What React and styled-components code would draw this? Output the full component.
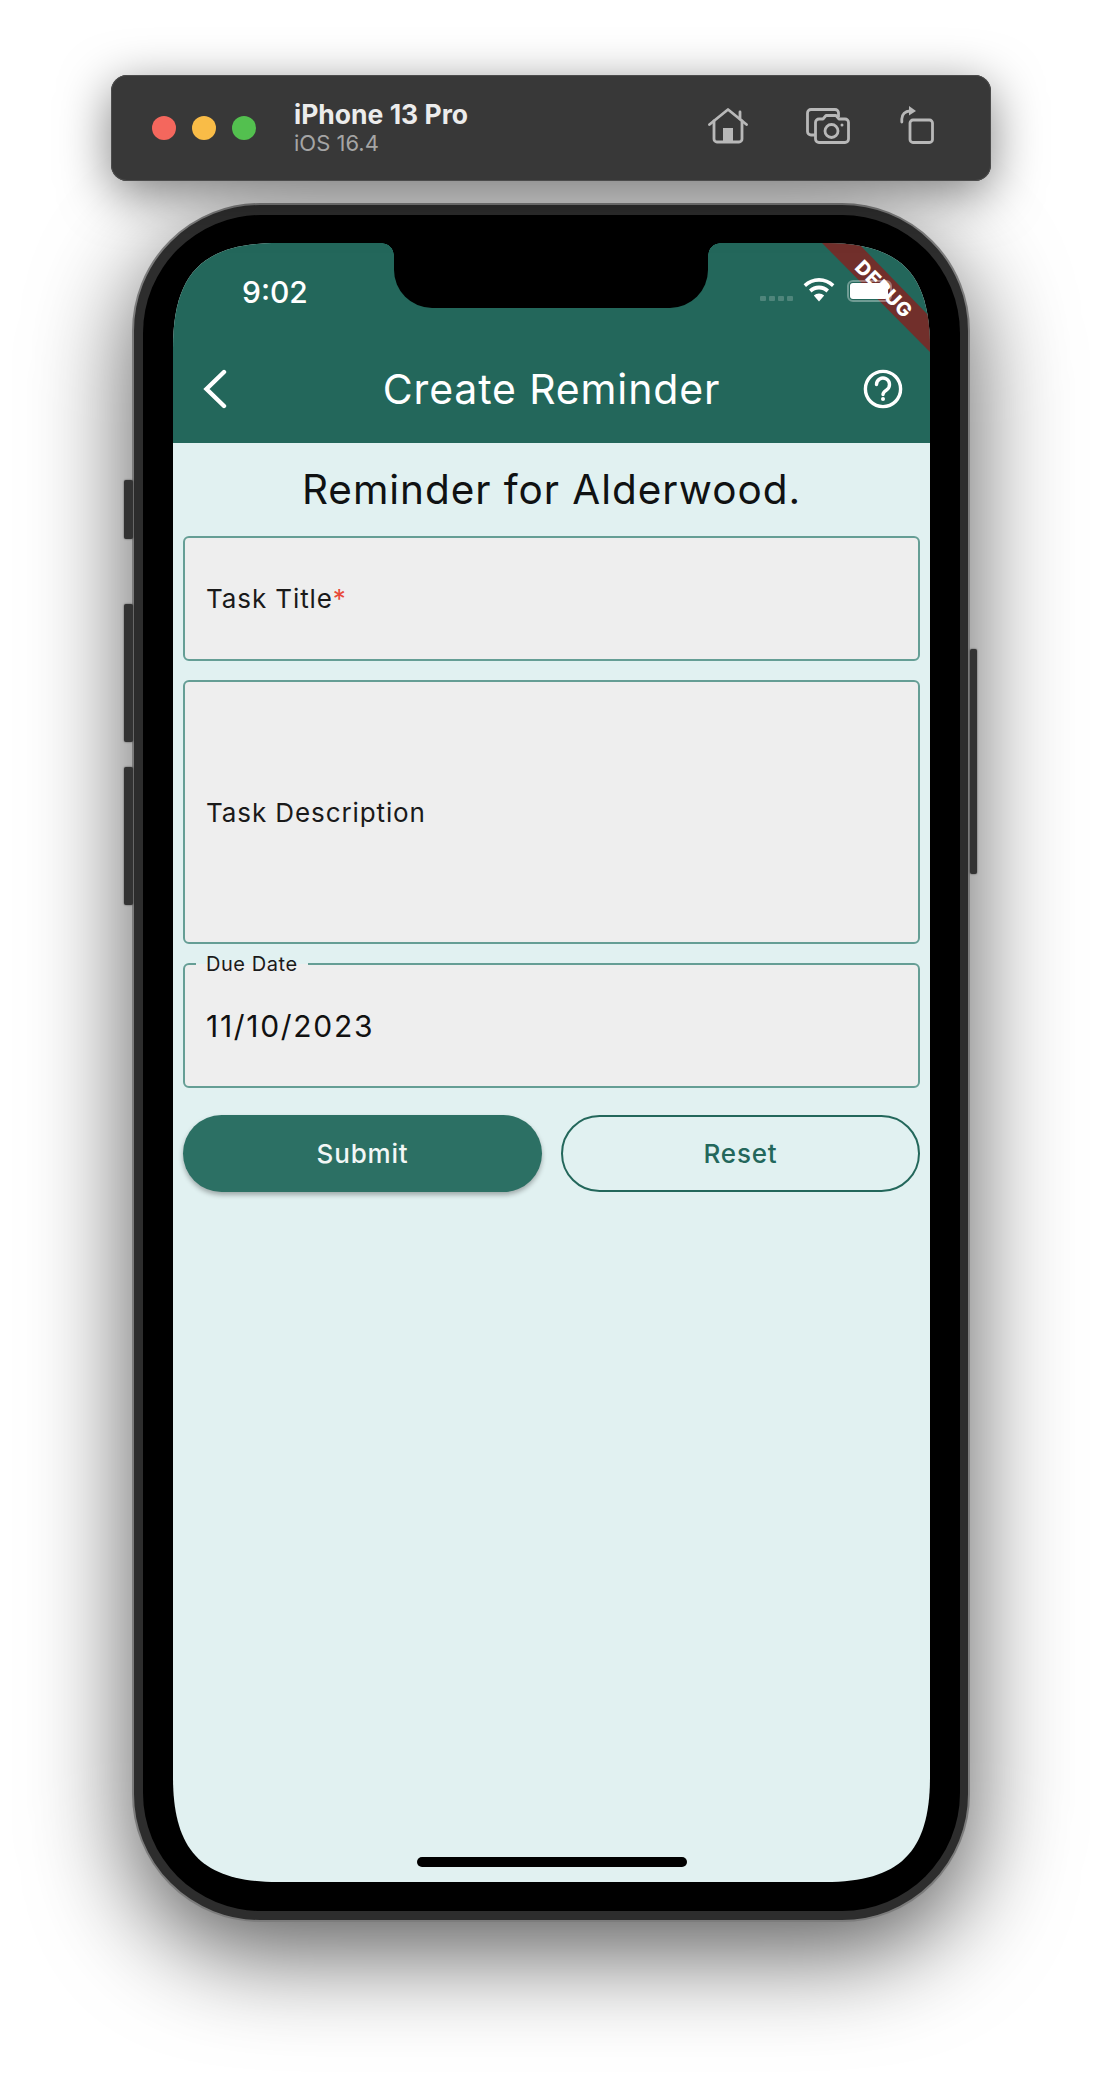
import React from "react";
import styled, { createGlobalStyle } from "styled-components";

const Global = createGlobalStyle`
  html, body { margin: 0; padding: 0; background: #fff; }
  body { font-family: "Inter", "Roboto", sans-serif; }
`;

// screen corners are a squircle, not a plain circle
const R = 105;
const C = 30;
const W = 757;
const H = 1639;
const SCREEN_SHAPE = `M0 ${R} C0 ${C} ${C} 0 ${R} 0 H${W - R} C${W - C} 0 ${W} ${C} ${W} ${R} V${H - R} C${W} ${H - C} ${W - C} ${H} ${W - R} ${H} H${R} C${C} ${H} 0 ${H - C} 0 ${H - R} Z`;

const Page = styled.div`
  width: 1102px;
  height: 2074px;
  overflow: hidden;
  display: flex;
  flex-direction: column;
  align-items: center;
  padding-top: 75px;
  box-sizing: border-box;
`;

const Toolbar = styled.div`
  position: relative;
  z-index: 2;
  width: 880px;
  height: 106px;
  box-sizing: border-box;
  background: #383838;
  border-radius: 16px;
  box-shadow: inset 0 0 0 1px #4c4c4c, 0 12px 50px rgba(0, 0, 0, 0.5);
  display: flex;
  align-items: center;
  padding: 0 57px 0 41px;
`;

const Lights = styled.div`
  display: flex;
  gap: 16px;
  margin-right: 38px;
`;

const Light = styled.span`
  width: 24px;
  height: 24px;
  border-radius: 50%;
  background: ${(p) => p.$color};
`;

const DeviceInfo = styled.div`
  display: flex;
  flex-direction: column;
  flex: 1;
`;

const DeviceName = styled.div`
  color: #ececec;
  font-size: 26.5px;
  font-weight: 700;
  line-height: 30px;
`;

const DeviceOs = styled.div`
  color: #a5a5a5;
  font-size: 22px;
  line-height: 28px;
`;

const ToolIcons = styled.div`
  display: flex;
  align-items: flex-end;
  gap: 50px;
  margin-bottom: 6px;
  & > :first-child {
    margin-right: 8px;
  }
`;

const Phone = styled.div`
  position: relative;
  width: 838px;
  height: 1719px;
  margin-top: 22px;
  box-sizing: border-box;
  padding: 10px 8px 9px 9px;
  background: #2d2d2d;
  border-radius: 128px;
  border: 2px solid #7c7c7c;
  box-shadow: 0 30px 100px rgba(0, 0, 0, 0.65);
`;

const Bezel = styled.div`
  height: 100%;
  box-sizing: border-box;
  padding: 28px 30px 29px;
  background: #000;
  border-radius: 118px;
`;

const Screen = styled.div`
  position: relative;
  height: 100%;
  overflow: hidden;
  background: #e1f1f1;
  clip-path: path("${SCREEN_SHAPE}");
  display: flex;
  flex-direction: column;
`;

const SideButton = styled.div`
  position: absolute;
  top: ${(p) => p.$top}px;
  height: ${(p) => p.$height}px;
  ${(p) => (p.$right ? "right: -9px; width: 7px;" : "left: -10px; width: 9px;")}
  background: #333;
  border-radius: 2px;
  box-shadow: 0 0 2px rgba(0, 0, 0, 0.6);
`;

const Notch = styled.div`
  position: absolute;
  z-index: 4;
  top: 0;
  left: 221px;
  width: 314px;
  height: 65px;
  background: #000;
  border-radius: 0 0 38px 38px;
  &::before,
  &::after {
    content: "";
    position: absolute;
    top: 0;
    width: 12px;
    height: 12px;
  }
  &::before {
    left: -12px;
    background: radial-gradient(circle at 0 100%, transparent 11.5px, #000 12px);
  }
  &::after {
    right: -12px;
    background: radial-gradient(circle at 100% 100%, transparent 11.5px, #000 12px);
  }
`;

const AppBar = styled.div`
  background: #23675b;
  height: 200px;
  flex: none;
  display: flex;
  flex-direction: column;
  color: #fff;
`;

const StatusBar = styled.div`
  position: relative;
  z-index: 3;
  height: 110px;
  box-sizing: border-box;
  padding: 31px 38px 0 69px;
  display: flex;
  justify-content: space-between;
  align-items: flex-start;
`;

const Clock = styled.div`
  font-size: 30px;
  font-weight: 500;
  line-height: 36px;
`;

const StatusIcons = styled.div`
  display: flex;
  align-items: flex-start;
  margin-top: 4px;
`;

const SignalDots = styled.div`
  display: flex;
  gap: 3px;
  margin-right: 10px;
  margin-top: 18px;
`;

const SignalDot = styled.span`
  width: 6px;
  height: 5px;
  border-radius: 1px;
  background: rgba(255, 255, 255, 0.2);
`;

const Battery = styled.div`
  width: 45px;
  height: 22px;
  margin-left: 12px;
  margin-top: 2px;
  box-sizing: border-box;
  padding: 1px;
  border-radius: 6px;
  border: 2px solid rgba(255, 255, 255, 0.35);
  &::before {
    content: "";
    display: block;
    width: 38px;
    height: 16px;
    border-radius: 3px;
    background: #fff;
  }
`;

const TitleRow = styled.div`
  flex: 1;
  display: flex;
  align-items: center;
  justify-content: space-between;
  padding: 0 27px 18px 30px;
`;

const AppTitle = styled.div`
  font-size: 41px;
  font-weight: 400;
  letter-spacing: 0.85px;
`;

const DebugBanner = styled.div`
  position: absolute;
  z-index: 2;
  top: 0;
  right: 0;
  width: 108px;
  height: 109px;
  background: #712f2b;
  clip-path: polygon(0 0, 36px 0, 108px 74px, 108px 109px);
`;

const DebugText = styled.div`
  position: absolute;
  z-index: 2;
  top: 34px;
  right: -14px;
  width: 120px;
  text-align: center;
  transform: rotate(45deg);
  color: #fff;
  font-size: 19.5px;
  font-weight: 800;
  letter-spacing: 0.8px;
`;

const Body = styled.div`
  padding: 0 10px;
  display: flex;
  flex-direction: column;
  gap: 19px;
`;

const Heading = styled.div`
  text-align: center;
  color: #101213;
  font-size: 40.5px;
  line-height: 93px;
  letter-spacing: 0.95px;
  margin-bottom: -19px;
`;

const Field = styled.div`
  position: relative;
  height: ${(p) => p.$height}px;
  box-sizing: border-box;
  background: #eee;
  border: 2px solid #659e95;
  border-radius: 6px;
  display: flex;
  align-items: center;
  padding-left: 21px;
  color: #1a1a1a;
  font-size: 26px;
  letter-spacing: 0.9px;
`;

const Required = styled.span`
  color: #e8493a;
`;

const FloatLabel = styled.div`
  position: absolute;
  top: -12px;
  left: 11px;
  padding: 0 10px;
  background: linear-gradient(#e1f1f1 50%, #eee 50%);
  font-size: 20px;
  line-height: 22px;
  letter-spacing: 0.55px;
`;

const DateValue = styled.span`
  font-size: 30px;
  letter-spacing: 1.7px;
  color: #111;
`;

const Buttons = styled.div`
  display: grid;
  grid-template-columns: 1fr 1fr;
  gap: 19px;
  margin-top: 8px;
`;

const PillButton = styled.div`
  height: 77px;
  box-sizing: border-box;
  border-radius: 39px;
  display: flex;
  align-items: center;
  justify-content: center;
  font-size: 26px;
  font-weight: 500;
  letter-spacing: 0.8px;
  background: ${(p) => (p.$filled ? "#2c7064" : "transparent")};
  color: ${(p) => (p.$filled ? "#f2f7f6" : "#23675b")};
  border: ${(p) => (p.$filled ? "none" : "2px solid #23675b")};
  box-shadow: ${(p) => (p.$filled ? "0 3px 5px rgba(0,0,0,0.3)" : "none")};
`;

const HomeBar = styled.div`
  position: absolute;
  left: 244px;
  bottom: 15px;
  width: 270px;
  height: 10px;
  border-radius: 5px;
  background: #000;
`;

const HomeIcon = () => (
  <svg width="40" height="36" viewBox="0 0 40 36" fill="none" stroke="#b8b8b8" strokeWidth="2.8" strokeLinejoin="round" strokeLinecap="round">
    <path d="M1.5 16.5 L20 1.5 L38.5 16.5" />
    <path d="M32 4 V11" />
    <path d="M6 13 V31 a3 3 0 0 0 3 3 H31 a3 3 0 0 0 3 -3 V13" />
    <path d="M15 34 V20 H25 V34 Z" fill="#b8b8b8" stroke="none" />
  </svg>
);

const CameraIcon = () => (
  <svg width="44" height="36" viewBox="0 0 44 36" fill="none" stroke="#b8b8b8" strokeWidth="2.8" strokeLinejoin="round">
    <path d="M9 27 H5 a3.5 3.5 0 0 1 -3.5 -3.5 V5 a3.5 3.5 0 0 1 3.5 -3.5 H29 a3.5 3.5 0 0 1 3.5 3.5 V9" />
    <path d="M13 11 H17 L20 7.5 H30 L33 11 H39 a3.5 3.5 0 0 1 3.5 3.5 V31 a3.5 3.5 0 0 1 -3.5 3.5 H13 a3.5 3.5 0 0 1 -3.5 -3.5 V14.5 a3.5 3.5 0 0 1 3.5 -3.5 Z" />
    <circle cx="25.5" cy="23" r="6.5" />
    <circle cx="36" cy="17" r="1.5" fill="#b8b8b8" stroke="none" />
  </svg>
);

const RotateIcon = () => (
  <svg width="34" height="38" viewBox="0 0 34 38" fill="none" stroke="#b8b8b8" strokeWidth="2.8" strokeLinejoin="round" strokeLinecap="round">
    <rect x="10" y="14" width="22.5" height="22.5" rx="3" />
    <path d="M1.8 16 V13 a8 8 0 0 1 8 -8" />
    <path d="M9 0 L16 5 L9 9.5 Z" fill="#b8b8b8" stroke="none" />
  </svg>
);

const WifiIcon = () => (
  <svg width="32" height="24" viewBox="0 0 32 24" fill="#fff">
    <path d="M16 0 C10 0 5 2.3 0.6 6.2 L3 9 C6.6 5.7 11 3.8 16 3.8 C21 3.8 25.4 5.7 29 9 L31.4 6.2 C27 2.3 22 0 16 0 Z" />
    <path d="M16 7.6 C12.2 7.6 8.8 9 6 11.6 L8.5 14.4 C10.6 12.5 13 11.4 16 11.4 C19 11.4 21.4 12.5 23.5 14.4 L26 11.6 C23.2 9 19.8 7.6 16 7.6 Z" />
    <path d="M16 15.4 C14 15.4 12.3 16.1 10.8 17.4 L16 23.4 L21.2 17.4 C19.7 16.1 18 15.4 16 15.4 Z" />
  </svg>
);

const BackIcon = () => (
  <svg width="37" height="40" viewBox="0 0 37 40" fill="none" stroke="#fff" strokeWidth="4.4" strokeLinecap="round" strokeLinejoin="miter">
    <path d="M21 3 L3.5 20 L21 37" />
  </svg>
);

const HelpIcon = () => (
  <svg width="40" height="40" viewBox="0 0 40 40" fill="none" stroke="#fff" strokeWidth="3.4" strokeLinecap="round">
    <circle cx="20" cy="20" r="17.6" />
    <path d="M13.5 15.5 a6.5 6.5 0 1 1 10.2 5.4 C21.2 22.6 20 23.6 20 25.5" />
    <circle cx="20" cy="30" r="2" fill="#fff" stroke="none" />
  </svg>
);

export default function App() {
  return (
    <Page>
      <Global />
      <Toolbar>
        <Lights>
          <Light $color="#f4675d" />
          <Light $color="#f9bc47" />
          <Light $color="#53c04f" />
        </Lights>
        <DeviceInfo>
          <DeviceName>iPhone 13 Pro</DeviceName>
          <DeviceOs>iOS 16.4</DeviceOs>
        </DeviceInfo>
        <ToolIcons>
          <HomeIcon />
          <CameraIcon />
          <RotateIcon />
        </ToolIcons>
      </Toolbar>
      <Phone>
        <SideButton $top={275} $height={59} />
        <SideButton $top={399} $height={138} />
        <SideButton $top={562} $height={138} />
        <SideButton $right $top={444} $height={225} />
        <Bezel>
          <Screen>
            <AppBar>
              <StatusBar>
                <Clock>9:02</Clock>
                <StatusIcons>
                  <SignalDots>
                    <SignalDot />
                    <SignalDot />
                    <SignalDot />
                    <SignalDot />
                  </SignalDots>
                  <WifiIcon />
                  <Battery />
                </StatusIcons>
              </StatusBar>
              <TitleRow>
                <BackIcon />
                <AppTitle>Create Reminder</AppTitle>
                <HelpIcon />
              </TitleRow>
            </AppBar>
            <Body>
              <Heading>Reminder for Alderwood.</Heading>
              <Field $height={125}>
                <span>
                  Task Title<Required>*</Required>
                </span>
              </Field>
              <Field $height={264}>Task Description</Field>
              <Field $height={125}>
                <FloatLabel>Due Date</FloatLabel>
                <DateValue>11/10/2023</DateValue>
              </Field>
              <Buttons>
                <PillButton $filled>Submit</PillButton>
                <PillButton>Reset</PillButton>
              </Buttons>
            </Body>
            <Notch />
            <DebugBanner />
            <DebugText>DEBUG</DebugText>
            <HomeBar />
          </Screen>
        </Bezel>
      </Phone>
    </Page>
  );
}
